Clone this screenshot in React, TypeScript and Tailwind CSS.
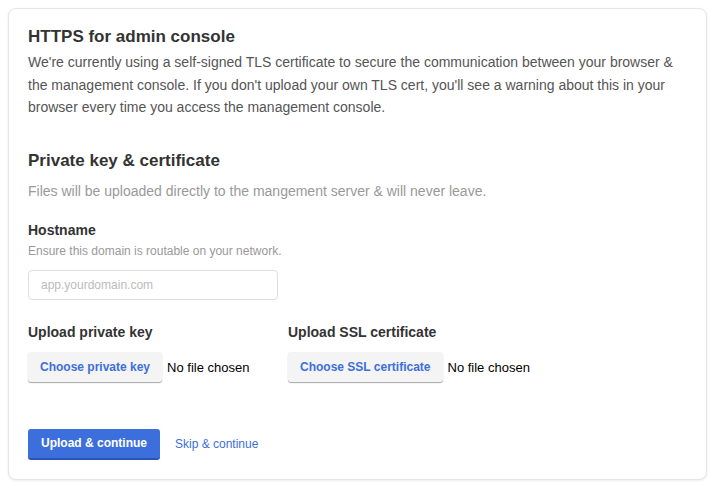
import React from 'react'

const font = { fontFamily: '"Liberation Sans", Arial, Helvetica, sans-serif' }

function FileField({ label, button }: { label: string; button: string }) {
  return (
    <div className="w-[260px] shrink-0">
      <div className="text-[14px] font-bold leading-5 text-[#333]">{label}</div>
      <div className="mt-[10px] flex items-center">
        <button
          type="button"
          className="h-[30px] rounded-[3px] bg-[#f4f4f4] px-3 text-[12px] font-bold text-[#3d6fd9] shadow-[0_1px_1px_rgba(0,0,0,0.35)]"
        >
          {button}
        </button>
        <span className="ml-[5px] mt-[2px] text-[13px] text-black">No file chosen</span>
      </div>
    </div>
  )
}

export default function App() {
  return (
    <div className="min-h-screen bg-white p-2" style={font}>
      <div className="h-[472px] w-[699px] rounded-[8px] border border-[#e6e6e6] bg-white px-[19px] pt-4 shadow-[0_1px_3px_rgba(0,0,0,0.08)]">
        <h1 className="text-[17px] font-bold leading-6 text-[#333]">HTTPS for admin console</h1>
        <p className="mt-[2px] text-[14px] leading-[22.5px] text-[#555]">
          We're currently using a self-signed TLS certificate to secure the communication between your browser &amp; the
          management console. If you don't upload your own TLS cert, you'll see a warning about this in your browser every
          time you access the management console.
        </p>

        <h2 className="mt-[30px] text-[17px] font-bold leading-6 text-[#333]">Private key &amp; certificate</h2>
        <p className="mt-2 text-[14px] leading-5 text-[#999]">
          Files will be uploaded directly to the mangement server &amp; will never leave.
        </p>

        <div className="mt-[19px] text-[14px] font-bold leading-5 text-[#333]">Hostname</div>
        <div className="mt-[3px] text-[12px] leading-4 text-[#999]">Ensure this domain is routable on your network.</div>
        <input
          type="text"
          placeholder="app.yourdomain.com"
          className="mt-[11px] block h-[30px] w-[250px] rounded-[4px] border border-[#ddd] px-3 text-[12px] text-[#333] placeholder:text-[#bbb] focus:outline-none"
        />

        <div className="mt-[22px] flex">
          <FileField label="Upload private key" button="Choose private key" />
          <FileField label="Upload SSL certificate" button="Choose SSL certificate" />
        </div>

        <div className="mt-[47px] flex items-center">
          <button
            type="button"
            className="h-[31px] w-[132px] rounded-[3px] border-b-2 border-[#2c55b8] bg-[#3d6fdc] text-[12px] font-bold text-white"
          >
            Upload &amp; continue
          </button>
          <a href="#" className="ml-[15px] text-[12px] text-[#3d6fd9]">
            Skip &amp; continue
          </a>
        </div>
      </div>
    </div>
  )
}
